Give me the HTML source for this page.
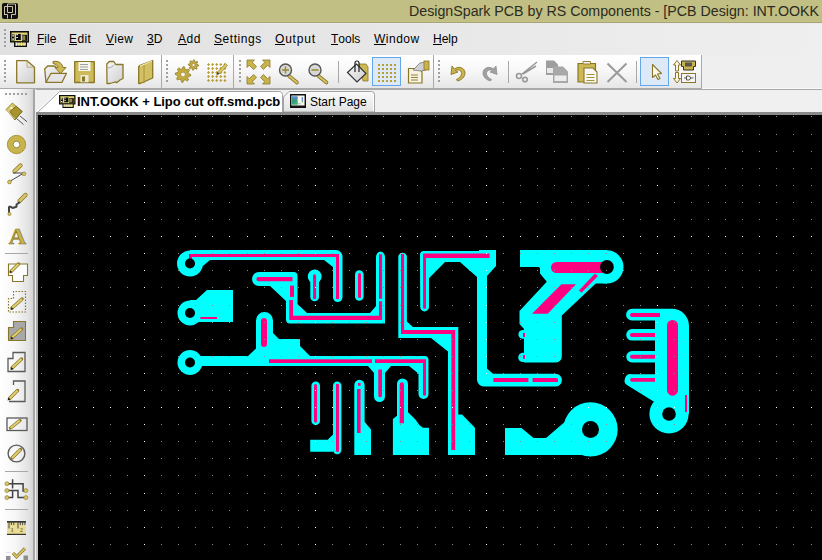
<!DOCTYPE html>
<html><head><meta charset="utf-8">
<style>
*{margin:0;padding:0;box-sizing:border-box}
html,body{width:822px;height:560px;overflow:hidden;background:#f0f0f0;font-family:"Liberation Sans",sans-serif;position:relative}
.a{position:absolute}
svg.a{overflow:visible}
#title{left:0;top:0;width:822px;height:23px;background:linear-gradient(#c1bf83 0,#c1bf83 21px,#c5c387 21px,#c5c387 22px,#a6a374 22px)}
#title .t{left:409px;top:1px;font-size:15.5px;line-height:20px;transform:scaleX(0.917);transform-origin:0 0;color:#2b2b22;white-space:nowrap}
#menubar{left:0;top:23px;width:822px;height:32px;background:linear-gradient(90deg,#e1e1e1,#e6e6e6 40%,#efefef);border-top:1px solid #ebebed}
.mi{position:absolute;top:8px;font-size:12px;line-height:14px;color:#000;white-space:nowrap}
.mi b{font-weight:normal;position:relative;display:inline-block;line-height:14px}
.mi b::after{content:"";position:absolute;left:0;right:0;top:12px;height:1px;background:#000}
#tbrow{left:0;top:55px;width:822px;height:35px;background:#efefef;border-bottom:1px solid #a9a9a9;box-shadow:inset 0 -1px 0 #fafafa}
.tb{position:absolute;top:0;height:34px;border-right:1px solid #a9a9a9;border-bottom:1px solid #a9a9a9;background:linear-gradient(#ffffff,#f8f8f8 45%,#e6e6e6)}
.grip{position:absolute;width:2px;background:repeating-linear-gradient(#a0a0a0 0 2px,transparent 2px 4px)}
#tabrow{left:35px;top:90px;width:787px;height:23px;background:#f0f0f0}
#leftbar{left:0;top:89px;width:36px;height:471px;background:#f0f0f0}
#leftpanel{left:0;top:89px;width:35px;height:471px;background:linear-gradient(90deg,#ffffff 0,#f7f7f7 45%,#e3e3e3 85%,#d4d4d4);border-right:2px solid #a6a6a6}
#canvas{left:38px;top:115px;width:784px;height:445px;background:#000}
#cborder{left:36px;top:112px;width:786px;height:448px;background:linear-gradient(#8a8a8a,#c8c8c8)}
.sep{position:absolute;width:1px;background:#a8a8a8}
.hsep{position:absolute;height:1px;background:#a8a8a8}
</style></head>
<body>
<div id="title" class="a">
  <svg class="a" style="left:2px;top:3px" width="16" height="16" viewBox="0 0 16 16">
    <rect x="0" y="0" width="16" height="16" rx="2" fill="#111"/>
    <path d="M2.5 12V3.5h8M5.5 1v8.5h5V3.5M5.5 1h8v10.5M2.5 11.5h3v4M13.5 11.5h-4v4" stroke="#cfc3a6" stroke-width="1" fill="none"/>
  </svg>
  <div class="a t">DesignSpark PCB by RS Components - [PCB Design: INT.OOKK</div>
</div>
<div id="menubar" class="a">
  <div class="grip" style="left:4px;top:5px;height:18px"></div>
  <svg class="a" style="left:10px;top:7px" width="19" height="16" viewBox="0 0 19 16">
    <path d="M0 0h19v11.6h-2v4.4H4v-4.4H0z" fill="#0d0d0d"/>
    <rect x="1.5" y="1.5" width="16" height="8.6" fill="#e2d672"/>
    <rect x="5" y="11.6" width="11" height="3" fill="#d8cc66"/>
    <path d="M6.5 11.6v3M9 11.6v3M11.5 11.6v3M14 11.6v3" stroke="#eeeeee" stroke-width="1"/>
    <path d="M5.5 11.6v3" stroke="#8a8a20" stroke-width="1"/>
    <rect x="2" y="3.5" width="2.5" height="6" fill="#0d0d0d"/>
    <rect x="2.3" y="4.2" width="1.6" height="1.3" fill="#fff"/><rect x="2.3" y="7.4" width="1.6" height="1.4" fill="#fff"/>
    <rect x="6" y="3" width="4.8" height="6" fill="#0d0d0d"/>
    <rect x="6.2" y="3.2" width="1.8" height="1" fill="#fff"/><rect x="6.2" y="6.1" width="1.8" height="0.9" fill="#fff"/>
    <rect x="12" y="3.8" width="5" height="6" fill="#0d0d0d"/>
    <rect x="12.5" y="4.5" width="0.8" height="4.5" fill="#e8e8e8"/><rect x="13.3" y="4.5" width="2" height="4.5" fill="#9a9020"/>
  </svg>
  <div class="mi" style="left:37px"><b>F</b>ile</div>
  <div class="mi" style="left:69px;letter-spacing:0.4px"><b>E</b>dit</div>
  <div class="mi" style="left:106px;letter-spacing:0.3px"><b>V</b>iew</div>
  <div class="mi" style="left:147px"><b>3</b>D</div>
  <div class="mi" style="left:178px;letter-spacing:0.5px"><b>A</b>dd</div>
  <div class="mi" style="left:214px;letter-spacing:0.55px"><b>S</b>ettings</div>
  <div class="mi" style="left:275px;letter-spacing:0.8px"><b>O</b>utput</div>
  <div class="mi" style="left:331px"><b>T</b>ools</div>
  <div class="mi" style="left:374px;letter-spacing:0.5px"><b>W</b>indow</div>
  <div class="mi" style="left:433px"><b>H</b>elp</div>
</div>
<div id="tbrow" class="a">
  <div class="tb" style="left:0;width:162px"><div class="grip" style="left:4px;top:5px;height:22px"></div></div>
  <div class="tb" style="left:162px;width:72px"><div class="grip" style="left:4px;top:5px;height:22px"></div></div>
  <div class="tb" style="left:234px;width:200px"><div class="grip" style="left:5px;top:5px;height:22px"></div><div class="sep" style="left:104px;top:6px;height:22px"></div></div>
  <div class="tb" style="left:434px;width:268px"><div class="grip" style="left:4px;top:5px;height:22px"></div><div class="sep" style="left:74px;top:6px;height:22px"></div><div class="sep" style="left:202px;top:6px;height:22px"></div></div>
  <!--TBICONS-->
<svg class="a" style="left:0;top:-55px" width="822" height="100">
<defs>
 <linearGradient id="gg" x1="0" y1="0" x2="1" y2="1"><stop offset="0" stop-color="#efe4a0"/><stop offset="0.5" stop-color="#cdb954"/><stop offset="1" stop-color="#a89435"/></linearGradient>
 <linearGradient id="gy" x1="0" y1="0" x2="1" y2="1"><stop offset="0" stop-color="#f6f6f6"/><stop offset="1" stop-color="#cfcfcf"/></linearGradient>
</defs>
<g stroke="#8a7628" stroke-width="1.3" stroke-linejoin="round">
 <!-- new doc -->
 <path d="M16.7 60.7H27l7.5 6.5V82.8H16.7z" fill="url(#gy)"/>
 <path d="M27 60.7v6.5h7.5" fill="none" stroke="#b0a060" stroke-width="0.8"/>
 <!-- open -->
 <path d="M44.7 69l3-3h7l2 2h4l-2 14.3H46z" fill="url(#gy)"/>
 <path d="M46 82.3l5-9h15.5l-4.5 9z" fill="#e4e4e4"/>
 <path d="M53 61.5c6 -1 9 2 10 6h3l-5.5 6l-5.5-6h3c-0.5-2-2-3.5-5-4z" fill="#cdb954" stroke-width="1"/>
 <!-- save -->
 <path d="M74.7 61.7H94.3V82.5H74.7z" fill="#cdbb5a"/>
 <rect x="78.5" y="62" width="12" height="9" fill="#f8f8f0" stroke="none"/>
 <path d="M80 64.5h8M80 67h8M80 69.5h8" stroke="#777" stroke-width="0.7"/>
 <rect x="80.5" y="75" width="8" height="7.3" fill="#e8e8e0" stroke="none"/>
 <rect x="82" y="76.5" width="3" height="5" fill="#8a7628" stroke="none"/>
 <!-- folder doc -->
 <path d="M106.8 64l2.5-2.5h4.5l2 3H123V78.5l-3 1.5l-3 2.5l-2-0.5l-5 1.5H107z" fill="url(#gy)"/>
 <path d="M108 68c3 0 5-2 6.5-3.5" fill="none" stroke="#999" stroke-width="0.8"/>
 <!-- book -->
 <path d="M138.7 66.5l2-1.5l12-4.5V78l-12.5 5.5h-1.5z" fill="#d2c164"/>
 <path d="M144 65v18.3" stroke="#a89435" stroke-width="1"/>
 <path d="M140 66l12-5" stroke="#f8f2c0" stroke-width="1"/>
 <!-- grid pencil -->
</g>
<!-- gears -->
<path d="M190.8 74.5L190.7 76.0L188.2 76.6L187.7 77.6L188.5 80.0L187.3 81.0L185.1 79.7L184.1 80.0L183.0 82.3L181.5 82.2L180.9 79.7L179.9 79.2L177.5 80.0L176.5 78.8L177.8 76.6L177.5 75.6L175.2 74.5L175.3 73.0L177.8 72.4L178.3 71.4L177.5 69.0L178.7 68.0L180.9 69.3L181.9 69.0L183.0 66.7L184.5 66.8L185.1 69.3L186.1 69.8L188.5 69.0L189.5 70.2L188.2 72.4L188.5 73.4z" fill="#c2ab3c" stroke="#8a7628" stroke-width="0.7"/><circle cx="183" cy="74.5" r="2.3" fill="#f6f6f6" stroke="#8a7628" stroke-width="0.5"/><path d="M198.7 65.0L198.6 66.0L196.8 66.4L196.5 67.0L197.2 68.7L196.4 69.3L194.9 68.3L194.2 68.5L193.5 70.2L192.5 70.1L192.1 68.3L191.5 68.0L189.8 68.7L189.2 67.9L190.2 66.4L190.0 65.7L188.3 65.0L188.4 64.0L190.2 63.6L190.5 63.0L189.8 61.3L190.6 60.7L192.1 61.7L192.8 61.5L193.5 59.8L194.5 59.9L194.9 61.7L195.5 62.0L197.2 61.3L197.8 62.1L196.8 63.6L197.0 64.3z" fill="#c2ab3c" stroke="#8a7628" stroke-width="0.7"/><circle cx="193.5" cy="65" r="1.5" fill="#f6f6f6" stroke="#8a7628" stroke-width="0.5"/>
<g fill="#b39b30">
 <path d="M208.5 63.0l1.5 1.5l-1.5 1.5l-1.5 -1.5zM212.6 63.0l1.5 1.5l-1.5 1.5l-1.5 -1.5zM216.7 63.0l1.5 1.5l-1.5 1.5l-1.5 -1.5zM220.8 63.0l1.5 1.5l-1.5 1.5l-1.5 -1.5zM224.9 63.0l1.5 1.5l-1.5 1.5l-1.5 -1.5zM208.5 67.0l1.5 1.5l-1.5 1.5l-1.5 -1.5zM212.6 67.0l1.5 1.5l-1.5 1.5l-1.5 -1.5zM216.7 67.0l1.5 1.5l-1.5 1.5l-1.5 -1.5zM220.8 67.0l1.5 1.5l-1.5 1.5l-1.5 -1.5zM224.9 67.0l1.5 1.5l-1.5 1.5l-1.5 -1.5zM208.5 71.0l1.5 1.5l-1.5 1.5l-1.5 -1.5zM212.6 71.0l1.5 1.5l-1.5 1.5l-1.5 -1.5zM216.7 71.0l1.5 1.5l-1.5 1.5l-1.5 -1.5zM220.8 71.0l1.5 1.5l-1.5 1.5l-1.5 -1.5zM224.9 71.0l1.5 1.5l-1.5 1.5l-1.5 -1.5zM208.5 75.0l1.5 1.5l-1.5 1.5l-1.5 -1.5zM212.6 75.0l1.5 1.5l-1.5 1.5l-1.5 -1.5zM216.7 75.0l1.5 1.5l-1.5 1.5l-1.5 -1.5zM220.8 75.0l1.5 1.5l-1.5 1.5l-1.5 -1.5zM224.9 75.0l1.5 1.5l-1.5 1.5l-1.5 -1.5zM208.5 79.0l1.5 1.5l-1.5 1.5l-1.5 -1.5zM212.6 79.0l1.5 1.5l-1.5 1.5l-1.5 -1.5zM216.7 79.0l1.5 1.5l-1.5 1.5l-1.5 -1.5zM220.8 79.0l1.5 1.5l-1.5 1.5l-1.5 -1.5zM224.9 79.0l1.5 1.5l-1.5 1.5l-1.5 -1.5z"/>
 <path d="M217.5 72l8-8.5l2 2l-8 8.5z" fill="#d8c460" stroke="#8a7628" stroke-width="0.6"/>
 <path d="M216.5 75l1-3l2 2z" fill="#333"/>
</g>
<!-- zoom fit arrows -->
<g fill="#c9b44c" stroke="#8a7628" stroke-width="0.8" stroke-linejoin="round">
 <path transform="translate(247 60) scale(1 1)" d="M0 0h7.5l-2.3 2.3l4.3 4.3l-2.9 2.9l-4.3 -4.3L0 7.5z"/><path transform="translate(270 60) scale(-1 1)" d="M0 0h7.5l-2.3 2.3l4.3 4.3l-2.9 2.9l-4.3 -4.3L0 7.5z"/><path transform="translate(247 84) scale(1 -1)" d="M0 0h7.5l-2.3 2.3l4.3 4.3l-2.9 2.9l-4.3 -4.3L0 7.5z"/><path transform="translate(270 84) scale(-1 -1)" d="M0 0h7.5l-2.3 2.3l4.3 4.3l-2.9 2.9l-4.3 -4.3L0 7.5z"/>
</g>
<!-- zoom in/out -->
<g>
 <path d="M289 76l8 6.5" stroke="#8a7628" stroke-width="3.6" stroke-linecap="round"/>
 <path d="M289 76l8 6.5" stroke="#d6c467" stroke-width="2" stroke-linecap="round"/>
 <circle cx="285.5" cy="70" r="6" fill="#d8d8d8" stroke="#555" stroke-width="1.4"/>
 <path d="M282 70h7M285.5 66.5v7" stroke="#9a8630" stroke-width="1.5"/>
 <path d="M318.5 76l8 6.5" stroke="#8a7628" stroke-width="3.6" stroke-linecap="round"/>
 <path d="M318.5 76l8 6.5" stroke="#d6c467" stroke-width="2" stroke-linecap="round"/>
 <circle cx="315" cy="70" r="6" fill="#d8d8d8" stroke="#555" stroke-width="1.4"/>
 <path d="M311.5 70h7" stroke="#9a8630" stroke-width="1.5"/>
</g>
<!-- paint bucket -->
<g>
 <path d="M359 64h7l2 3v14h-5z" fill="#cdb954" stroke="#8a7628" stroke-width="0.8"/>
 <path d="M347.5 72.5l9-8.5l9.5 9.5l-9 8.5z" fill="url(#gy)" stroke="#333" stroke-width="1.2"/>
 <path d="M355 72V63a2 2 0 0 1 4 0v9" fill="none" stroke="#222" stroke-width="1.2"/>
</g>
<!-- grid button -->
<rect x="372.5" y="57.5" width="28" height="28" fill="#dde9f6" stroke="#64a6ea" stroke-width="1"/>
<g fill="#b5a035">
 <path d="M378 64h2v2h-2zM382 64h2v2h-2zM386 64h2v2h-2zM390 64h2v2h-2zM394 64h2v2h-2zM378 68h2v2h-2zM382 68h2v2h-2zM386 68h2v2h-2zM390 68h2v2h-2zM394 68h2v2h-2zM378 72h2v2h-2zM382 72h2v2h-2zM386 72h2v2h-2zM390 72h2v2h-2zM394 72h2v2h-2zM378 76h2v2h-2zM382 76h2v2h-2zM386 76h2v2h-2zM390 76h2v2h-2zM394 76h2v2h-2zM378 80h2v2h-2zM382 80h2v2h-2zM386 80h2v2h-2zM390 80h2v2h-2zM394 80h2v2h-2z"/>
</g>
<!-- doc hand -->
<g>
 <path d="M408.5 68.5H419l3 3V83H408.5z" fill="#f6f3e0" stroke="#8a7628" stroke-width="1.2"/>
 <path d="M411 75h7M411 77.5h7M411 80h7" stroke="#8a7628" stroke-width="0.9"/>
 <path d="M413 70l7-7l6-1v8l-5 1z" fill="#d0d0d0" stroke="#777" stroke-width="0.8"/>
 <rect x="424" y="61" width="5" height="9" fill="#c9b44c" stroke="#8a7628" stroke-width="0.8"/>
</g>
<!-- undo -->
<path d="M452 66l-1 8.5l7-2.5l-2.5-1.5c3-1.5 6 0 6 3c0 2.5-2 4.5-5 6l1 1.5c4-1 7.5-4 7.5-8c0-5-6-7.5-10.5-4z" fill="#c9b44c" stroke="#8a7628" stroke-width="0.9" stroke-linejoin="round"/>
<!-- redo (gray) -->
<path d="M496 66l1 8.5l-7-2.5l2.5-1.5c-3-1.5-6 0-6 3c0 2.5 2 4.5 5 6l-1 1.5c-4-1-7.5-4-7.5-8c0-5 6-7.5 10.5-4z" fill="#a0a0a0" stroke="#909090" stroke-width="0.8"/>
<!-- scissors -->
<g stroke="#9a9a9a" fill="none" stroke-width="1.6">
 <path d="M537 62l-15 12M536 66l-13 8"/>
 <circle cx="519" cy="76" r="2.5"/><circle cx="525" cy="79.5" r="2.3"/>
</g>
<!-- copy -->
<g>
 <path d="M546 60.5h8l4 4V75h-12z" fill="#9e9e9e"/>
 <rect x="547" y="68" width="9" height="5" fill="#e8e8e8"/>
 <path d="M553 66.5h10l5 5V83h-15z" fill="#a8a8a8"/>
 <rect x="554" y="75" width="13" height="6.5" fill="#ececec" stroke="#9e9e9e" stroke-width="0.8"/>
</g>
<!-- paste -->
<g>
 <path d="M578 63.5h17.5V82H578z" fill="#cdb954" stroke="#8a7628" stroke-width="1.2" rx="1"/>
 <path d="M583 64v-2.5h7.5V64z" fill="#f4f4f4" stroke="#8a7628" stroke-width="0.9"/>
 <path d="M584 68h9l4 4V83H584z" fill="#f8f8f4" stroke="#8a7628" stroke-width="1.1"/>
 <path d="M586.5 74.5h8M586.5 77.5h8M586.5 80.5h8" stroke="#a8922e" stroke-width="1"/>
</g>
<!-- X -->
<path d="M607.5 63.5l19 18.5M626.5 63.5l-19 18.5" stroke="#9a9a9a" stroke-width="2"/>
<!-- select -->
<rect x="640.5" y="57.5" width="28" height="28" fill="#dde9f6" stroke="#64a6ea" stroke-width="1"/>
<path d="M652.5 64.5V77.5l3-2.5l2.5 4.5l2-1l-2.5-4.5l4 -0.5z" fill="#fbf8ea" stroke="#8a7628" stroke-width="1.1" stroke-linejoin="round"/>
<!-- flip -->
<g stroke="#8a7628" stroke-width="1" fill="#f8f6ea">
 <path d="M677 60.5l-3.5 4.5h2v6h3v-6h2z"/>
 <path d="M677 83l-3.5-4.5h2v-6h3v6h2z"/>
 <path d="M681.5 61h14v5.5h-2v3.5h-10v-3.5h-2z" fill="#c9b44c" stroke="#333"/>
 <rect x="685" y="62.5" width="7" height="4" fill="#555" stroke="none"/>
 <rect x="681.5" y="73.5" width="14" height="9" fill="#f6f6f2"/>
 <path d="M684 78h2.5M686.5 76v4h2a2 2 0 0 0 0-4zM690.5 78h3" stroke="#333" stroke-width="0.8" fill="none"/>
</g>
</svg>

</div>
<div id="tabrow" class="a"></div>
<svg class="a" style="left:0;top:0" width="822" height="120">
  <defs><linearGradient id="tg2" x1="0" y1="0" x2="0" y2="1"><stop offset="0" stop-color="#fbfbfb"/><stop offset="1" stop-color="#e2e2e2"/></linearGradient></defs>
  <path d="M283.5 112V97l5.5-5.5H371.5a3 3 0 0 1 3 3V112z" fill="url(#tg2)" stroke="#a3a3a3" stroke-width="1"/>
  <path d="M373.5 95v16" stroke="#ffffff" stroke-width="1"/>
  <rect x="36" y="112" width="786" height="1" fill="#cfcfcf"/>
  <rect x="36" y="113" width="786" height="1" fill="#a5a5a5"/>
  <rect x="36" y="114" width="786" height="1" fill="#6e6e6e"/>
  <path d="M35 113V112L59.5 91H282.5V113z" fill="#ffffff"/><path d="M35.5 112.5H37.5L59.7 91.5H279.5a3 3 0 0 1 3 3V112.5" fill="none" stroke="#a3a3a3" stroke-width="1"/><rect x="37" y="112" width="245" height="1" fill="#fff"/>
</svg>
<svg class="a" style="left:59px;top:95px" width="16.5" height="13" viewBox="0 0 19 16" preserveAspectRatio="none">
    <path d="M0 0h19v11.6h-2v4.4H4v-4.4H0z" fill="#0d0d0d"/>
    <rect x="1.5" y="1.5" width="16" height="8.6" fill="#e2d672"/>
    <rect x="5" y="11.6" width="11" height="3" fill="#d8cc66"/>
    <path d="M6.5 11.6v3M9 11.6v3M11.5 11.6v3M14 11.6v3" stroke="#eeeeee" stroke-width="1"/>
    <path d="M5.5 11.6v3" stroke="#8a8a20" stroke-width="1"/>
    <rect x="2" y="3.5" width="2.5" height="6" fill="#0d0d0d"/>
    <rect x="2.3" y="4.2" width="1.6" height="1.3" fill="#fff"/><rect x="2.3" y="7.4" width="1.6" height="1.4" fill="#fff"/>
    <rect x="6" y="3" width="4.8" height="6" fill="#0d0d0d"/>
    <rect x="6.2" y="3.2" width="1.8" height="1" fill="#fff"/><rect x="6.2" y="6.1" width="1.8" height="0.9" fill="#fff"/>
    <rect x="12" y="3.8" width="5" height="6" fill="#0d0d0d"/>
    <rect x="12.5" y="4.5" width="0.8" height="4.5" fill="#e8e8e8"/><rect x="13.3" y="4.5" width="2" height="4.5" fill="#9a9020"/>
  </svg>
<div class="a" style="left:77px;top:94px;font-size:13px;font-weight:bold;letter-spacing:-0.05px;line-height:15px;color:#000;white-space:nowrap">INT.OOKK + Lipo cut off.smd.pcb</div>
<svg class="a" style="left:290px;top:94px" width="16" height="14" viewBox="0 0 17 14" preserveAspectRatio="none">
  <rect x="0" y="0" width="17" height="14" fill="#111"/>
  <rect x="1.5" y="1.5" width="14" height="10" fill="#fbf8ee"/>
  <rect x="2" y="2.5" width="6" height="8" fill="#3f9a8a"/>
  <path d="M2 10.5l6-3v3z" fill="#33c060"/><rect x="2" y="2.5" width="6" height="2" fill="#5a8ad0"/>
  <rect x="12.5" y="3" width="1" height="4" fill="#2a5fd0"/><rect x="12.5" y="7" width="1" height="1.5" fill="#30b040"/>
  <rect x="8.5" y="9" width="3" height="1.5" fill="#c8c8c8"/>
</svg>
<div class="a" style="left:310px;top:95px;font-size:12px;line-height:15px;color:#000;white-space:nowrap">Start Page</div>
<div id="leftbar" class="a"></div>
<div id="leftpanel" class="a"><div class="grip" style="left:5px;top:4px;height:2px;width:22px;background:repeating-linear-gradient(90deg,#a0a0a0 0 2px,transparent 2px 4px)"></div>
  <div class="hsep" style="left:5px;top:164px;width:23px"></div>
  <div class="hsep" style="left:5px;top:382px;width:23px"></div>
  <div class="hsep" style="left:5px;top:420px;width:23px"></div>
  <svg class="a" style="left:0;top:-89px" width="36" height="560">
<defs>
 <linearGradient id="pg" x1="0" y1="0" x2="1" y2="0"><stop offset="0" stop-color="#c8c8c8"/><stop offset="1" stop-color="#9a9a9a"/></linearGradient>
</defs>
<!-- component -->
<path d="M16.5 118.5l7 6M20 116l7 5.7" stroke="#555" stroke-width="1"/>
<path d="M12.4 103L22.1 111.5L14.9 119.8L6 109.6z" fill="#d8c86a" stroke="#8a7628" stroke-width="0.8"/>
<path d="M10 111.5L16.2 106.2L22.1 111.5L14.9 119.8z" fill="#a8942f" stroke="#6e5e1a" stroke-width="0.8"/>
<path d="M7 110.5l8 8.5" stroke="#f0e6a8" stroke-width="0.8"/>
<circle cx="11.4" cy="108" r="1.1" fill="#fff"/>
<!-- pad -->
<circle cx="16.5" cy="144.5" r="9.2" fill="#c8b44c"/>
<circle cx="16.5" cy="144.5" r="9.2" fill="none" stroke="#9c8830" stroke-width="0.8"/>
<circle cx="16.5" cy="144.5" r="3.3" fill="#ffffff" stroke="#8a7628" stroke-width="0.8"/>
<!-- track -->
<path d="M20.5 165.5l-6 5.8" stroke="#8a7628" stroke-width="4.2" stroke-linecap="round"/>
<path d="M20.5 165.5l-6 5.8" stroke="#d6c466" stroke-width="2.8" stroke-linecap="round"/>
<path d="M13 173h11l-14.5 8.5" stroke="#333" stroke-width="0.9" fill="none"/>
<circle cx="24" cy="173.8" r="1.9" fill="#d6c466" stroke="#8a7628" stroke-width="0.6"/>
<circle cx="9.5" cy="182" r="1.9" fill="#d6c466" stroke="#8a7628" stroke-width="0.6"/>
<!-- route -->
<path d="M19.5 201l6-6" stroke="#8a7628" stroke-width="4.2" stroke-linecap="round"/>
<path d="M19.5 201l6-6" stroke="#d6c466" stroke-width="2.8" stroke-linecap="round"/>
<path d="M20 202l-3.5 2.5v2.2l-4 1.3l-2-1.3h-1.5v6" stroke="#444" stroke-width="2" fill="none" stroke-linejoin="bevel"/>
<circle cx="9.5" cy="214" r="1.6" fill="#d6c466" stroke="#8a7628" stroke-width="0.6"/>
<!-- A -->
<text x="17.5" y="244" text-anchor="middle" font-family="Liberation Serif" font-weight="bold" font-size="24" fill="#c8b44c" stroke="#8a7628" stroke-width="0.7">A</text>
<!-- shape1 -->
<path d="M8.5 264h19v11.5h-4v6h-11v-6h-4z" fill="#fff" stroke="#8a7628" stroke-width="1.1"/>
<path d="M11 271.5l7.5-7.5" stroke="#8a7628" stroke-width="3.4" stroke-linecap="round"/>
<path d="M11 271.5l7.5-7.5" stroke="#e0d070" stroke-width="2"/>
<path d="M9.5 273l1-2.5l1.5 1.5z" fill="#222"/>
<!-- shape2 dotted -->
<path d="M13.5 298.5v-7h12v20.5h-17v-13.5h5" fill="none" stroke="#8a7628" stroke-width="1.2" stroke-dasharray="1.6 1.4"/>
<path d="M12 308l10-9" stroke="#8a7628" stroke-width="3.4" stroke-linecap="round"/>
<path d="M12 308l10-9" stroke="#e0d070" stroke-width="2"/>
<path d="M10.5 310l1-3l2 2z" fill="#222"/>
<!-- shape3 filled -->
<path d="M13.5 321.5h12v19h-17v-13h5z" fill="#a8a8a8" stroke="#8a7628" stroke-width="1.1"/>
<path d="M12 337.5l9.5-8.5" stroke="#8a7628" stroke-width="3.4" stroke-linecap="round"/>
<path d="M12 337.5l9.5-8.5" stroke="#e0d070" stroke-width="2"/>
<path d="M10.5 339.5l1-3l2 2z" fill="#222"/>
<!-- shape4 -->
<path d="M13 352.5h12v19h-17v-13h5z" fill="none" stroke="#5a5a5a" stroke-width="1.3"/>
<path d="M12 368l9.5-9" stroke="#8a7628" stroke-width="3.4" stroke-linecap="round"/>
<path d="M12 368l9.5-9" stroke="#e0d070" stroke-width="2"/>
<path d="M10.5 370l1-3l2 2z" fill="#222"/>
<!-- shape5 -->
<path d="M13.5 385v-4h11.5v20.5h-16" fill="none" stroke="#5a5a5a" stroke-width="1.3"/>
<path d="M9.5 398.5l8-8" stroke="#8a7628" stroke-width="3.4" stroke-linecap="round"/>
<path d="M9.5 398.5l8-8" stroke="#e0d070" stroke-width="2"/>
<path d="M7.5 400.5l1-3l2 2z" fill="#222"/>
<!-- rect -->
<rect x="7" y="418" width="20" height="12.5" fill="none" stroke="#5a5a5a" stroke-width="1.3"/>
<path d="M10.5 428l9.5-7.5" stroke="#8a7628" stroke-width="3.4" stroke-linecap="round"/>
<path d="M10.5 428l9.5-7.5" stroke="#e0d070" stroke-width="2"/>
<!-- circle -->
<circle cx="16.5" cy="453.5" r="8.4" fill="none" stroke="#5a5a5a" stroke-width="1.4"/>
<path d="M12 458l8.5-8.5" stroke="#8a7628" stroke-width="3.4" stroke-linecap="round"/>
<path d="M12 458l8.5-8.5" stroke="#e0d070" stroke-width="2"/>
<!-- net -->
<path d="M12.6 479.3v9.2M7 483.7h16.1v7.2h2.5M7 490.6h11v7h7.5M7 497.6h5.6v-7" stroke="#444" stroke-width="1.5" fill="none"/>
<g fill="#d6c466" stroke="#8a7628" stroke-width="0.6">
 <circle cx="6.9" cy="483.7" r="2"/><circle cx="6.9" cy="490.6" r="2"/><circle cx="6.9" cy="497.6" r="2"/>
 <circle cx="25.9" cy="490.6" r="2"/><circle cx="25.9" cy="497.6" r="2"/>
</g>
<!-- ruler -->
<rect x="7" y="521" width="19" height="14" fill="#e8dc96"/>
<rect x="7" y="521" width="19" height="1.6" fill="#333"/>
<rect x="7" y="533.8" width="19" height="1.2" fill="#333"/>
<path d="M9 521v7.5M18 521v7.5M11.4 521v4M13.8 521v4M20.3 521v4M22.6 521v4M24.9 521v4" stroke="#3a3a3a" stroke-width="0.9"/>
<text x="12" y="532" text-anchor="middle" font-family="Liberation Serif" font-weight="bold" font-size="6.5" fill="#8a7628">1</text>
<text x="21.3" y="532" text-anchor="middle" font-family="Liberation Serif" font-weight="bold" font-size="6.5" fill="#8a7628">2</text>
<!-- check -->
<path d="M6 556h4.5v4H6zM23.5 555.5h4.5v4.5h-4.5z" fill="#8e8e8e"/>
<path d="M6 552.5h4.5M23.5 552.5h4.5" stroke="#e0e0e0" stroke-width="1"/>
<path d="M13 553l3.5 3.8l8.5-8.5" stroke="#8a7628" stroke-width="3.2" fill="none"/>
<path d="M13 553l3.5 3.8l8.5-8.5" stroke="#d6c466" stroke-width="1.8" fill="none"/>
</svg>

</div>
<div id="cborder" class="a"></div>
<div id="canvas" class="a"></div>
<svg class="a" style="left:0;top:0" width="822" height="560" viewBox="0 0 822 560">
<g fill="#00ffff" stroke="none">
 <!-- pad1 + top trace -->
 <circle cx="190" cy="263.5" r="13"/>
 <rect x="190" y="250" width="145" height="10"/>
 <path d="M330 250h6a6.5 6.5 0 0 1 6.5 6.5V297.3a4.75 4.75 0 0 1 -9.5 0V267l-9-7z"/>
 <path d="M194 260h16l-6.5 5.5h-9.5z"/>
 <!-- pad2 -->
 <circle cx="190" cy="313" r="12.5"/>
 <path d="M190 300h6l11-10h26v32h-43z"/>
 <!-- pad3 + long trace -->
 <circle cx="190" cy="362.5" r="12.5"/>
 <path d="M190 356h234.5a4 4 0 0 1 4 4v6H190z"/>
 <path d="M418.5 366h10v28a4.7 4.7 0 0 1 -10 0z"/>
 <path d="M409 366h10v8z"/>
 <path d="M256 320.5a8.5 8.5 0 0 1 17 0V333l6 6h21v7l10 10H248l8-7.5z"/>
 <path d="M368 366h23l-6 7v23.5a5.5 5.5 0 0 1 -11 0V373z"/>
 <!-- L trace + C -->
 <path d="M259 272h34.5a4 4 0 0 1 4 4v28l9.5 9h69v-55.6a4.5 5.8 0 0 1 9 0V323.6H290a4 4 0 0 1 -4 -4V301l-16 -15h-11a7 7 0 0 1 0 -14z"/>
 <path d="M370 313l6-7v7z"/>
 <!-- pill 315 -->
 <circle cx="314.7" cy="276.5" r="6.9"/>
 <path d="M310.3 276h8.7v21a4.35 4.35 0 0 1 -8.7 0z"/>
 <!-- pill B -->
 <path d="M355 274.6a4.3 4.3 0 0 1 8.6 0V296.4a4.3 4.3 0 0 1 -8.6 0z"/>
 <!-- trace D -->
 <path d="M398.3 257a4.3 4.3 0 0 1 8.6 0V321.4l6 5.6H458.3V455H448V351.4L431 338H398.3z"/>
 <path d="M458 414.5h4l13 13.2V455H458z"/>
 <!-- trace E + band + F -->
 <path d="M420 255a4 4 0 0 1 4 -4H479v-1H496v16l-9 10V368.6l6 5.1H555.4a6.45 6.45 0 0 1 0 12.9H484a7 7 0 0 1 -7 -7V277l-17 -15H445l-16 16.3V307a4.4 4.4 0 0 1 -8.8 0z"/>
 <!-- blob -->
 <path d="M520 250H607v33.5h-11.3L561.8 315.6V356.5a6 6 0 0 1 -6 6H524V329l-4.5 -5V311L546.8 281.8L540 273.5V268l-1 -1H520z"/>
 <circle cx="606.9" cy="266.9" r="16.6"/>
 <circle cx="522.8" cy="334.4" r="4.4"/>
 <circle cx="522.8" cy="357.4" r="4.6"/>
 <!-- bottom pills -->
 <path d="M311.4 385.7a4.3 4.3 0 0 1 8.6 0V420.8a4.3 4.3 0 0 1 -8.6 0z"/>
 <path d="M333 385.7a4.2 4.2 0 0 1 8.4 0V450.1a4.2 4.2 0 0 1 -8.4 0V451.7H310.2V439.7h17.5l5.3-5.1z"/>
 <path d="M354.3 384.9a5.15 5.15 0 0 1 10.3 0V421.7l6.4 7.7V455H354.3z"/>
 <path d="M397 384a5.5 5.5 0 0 1 11 0V412.3l7 6.8l4.4 6l3.5 2.6H429V455H392.9V419l4.1 -3.3z"/>
 <!-- bottom-right pad -->
 <circle cx="590.5" cy="429.4" r="27.2"/>
 <path d="M505 428h16.5l12 10H546l19 -16.3L590 429V455H505z"/>
 <!-- comb -->
 <path d="M632 308.75h40a17 17 0 0 1 17 17V414H655V320.6H632a5.9 5.9 0 0 1 0 -11.85z"/>
 <path d="M632 329h23v11.6h-23a5.8 5.8 0 0 1 0 -11.6z"/>
 <path d="M632 351h23v11.5h-23a5.75 5.75 0 0 1 0 -11.5z"/>
 <path d="M632 374.3h23v27.5L653.6 401.4L627.8 385.6A6.1 6.1 0 0 1 632 374.3z"/>
 <circle cx="669" cy="414" r="19.6"/>
 <path d="M655 400l34 0v14l-34 0z"/>
</g>

<g fill="#ff0080" stroke="none">
 <path d="M189 254h150v3h-147v2h-3z"/>
 <rect x="336" y="254" width="3" height="45"/>
 <rect x="200.4" y="317" width="16.5" height="2"/>
 <path d="M261 321a3 3 0 0 1 6 0v23a3 3 0 0 1 -6 0z"/>
 <rect x="269" y="359.3" width="103" height="3.7"/>
 <path d="M375 359.3h51v35a1.5 1.5 0 0 1 -3 0V363h-48z"/>
 <path d="M378.3 369.4h3.7v26a1.85 1.85 0 0 1 -3.7 0z"/>
 <path d="M258.6 276.9h33.9v4.4h-33.9a2.2 2.2 0 0 1 0 -4.4z"/>
 <rect x="290" y="285.6" width="4" height="11.3"/>
 <path d="M289.3 300h3.8v15.7h85.9v-14.5h3.1v18.8H289.3z"/>
 <rect x="379" y="254.3" width="3.1" height="44.5"/>
 <path d="M313.1 275.8a1.5 1.5 0 0 1 3 0v22a1.5 1.5 0 0 1 -3 0z"/>
 <path d="M358 274.5a1.5 1.5 0 0 1 3 0v22a1.5 1.5 0 0 1 -3 0z"/>
 <path d="M401 254h3.1v76h51.1v120h-3.8V334H401z"/>
 <path d="M423.1 253.6h66.6v4.3H426V307.5a1.45 1.45 0 0 1 -2.9 0z"/>
 <rect x="493.4" y="378" width="35" height="4"/>
 <path d="M532.6 378H556a2 2 0 0 1 2 2v2H532.6z"/>
 <path d="M556.5 262H605v11H556.5a5.5 5.5 0 0 1 0 -11z"/>
 <path d="M561.4 284.2H576l-28.3 29.5H532z"/>
 <path d="M595 273.5l3 2.5l-16.5 16.8l-2.6 -2.4z"/>
 <rect x="523" y="333" width="2" height="4"/>
 <rect x="523" y="355" width="2" height="3.75"/>
 <path d="M314 385.5a1.55 1.55 0 0 1 3.1 0v35.6a1.55 1.55 0 0 1 -3.1 0z"/>
 <rect x="336" y="384" width="2.9" height="67.7"/>
 <rect x="357" y="389" width="3.6" height="44"/>
 <rect x="358" y="383" width="2.6" height="2.7"/>
 <path d="M399.7 384.3a2.15 2.15 0 0 1 4.3 0v39h-4.3z"/>
 <path d="M632 312.9h28v4h-28a2 2 0 0 1 0 -4z"/>
 <path d="M632 332.9h23v4.2h-23a2.1 2.1 0 0 1 0 -4.2z"/>
 <path d="M632 354.75h23v4h-23a2 2 0 0 1 0 -4z"/>
 <path d="M632 377.9h23v3.8h-23a1.9 1.9 0 0 1 0 -3.8z"/>
 <path d="M667 325.4a5.5 5.5 0 0 1 11 0V390.2a5.5 5.5 0 0 1 -11 0z"/>
 <rect x="685" y="395" width="2.1" height="17.1"/>
</g>
<g fill="#000">
 <circle cx="190" cy="263.5" r="5"/>
 <circle cx="190" cy="313" r="5"/>
 <circle cx="190" cy="362.5" r="5"/>
 <circle cx="606.9" cy="267" r="6.9"/>
 <circle cx="590.5" cy="429.4" r="8.5"/>
 <circle cx="669" cy="414" r="6.8"/>
</g>
</svg>

<svg class="a" style="left:0;top:0" width="822" height="560" shape-rendering="crispEdges"><path fill="#8a8a8a" d="M41 116h1v1h-1zM41 134h1v1h-1zM41 151h1v1h-1zM41 168h1v1h-1zM41 185h1v1h-1zM41 202h1v1h-1zM41 219h1v1h-1zM41 253h1v1h-1zM41 270h1v1h-1zM41 287h1v1h-1zM41 305h1v1h-1zM41 322h1v1h-1zM41 339h1v1h-1zM41 356h1v1h-1zM41 373h1v1h-1zM41 390h1v1h-1zM41 424h1v1h-1zM41 441h1v1h-1zM41 458h1v1h-1zM41 475h1v1h-1zM41 493h1v1h-1zM41 510h1v1h-1zM41 527h1v1h-1zM41 544h1v1h-1zM59 116h1v1h-1zM59 134h1v1h-1zM59 151h1v1h-1zM59 168h1v1h-1zM59 185h1v1h-1zM59 202h1v1h-1zM59 219h1v1h-1zM59 253h1v1h-1zM59 270h1v1h-1zM59 287h1v1h-1zM59 305h1v1h-1zM59 322h1v1h-1zM59 339h1v1h-1zM59 356h1v1h-1zM59 373h1v1h-1zM59 390h1v1h-1zM59 424h1v1h-1zM59 441h1v1h-1zM59 458h1v1h-1zM59 475h1v1h-1zM59 493h1v1h-1zM59 510h1v1h-1zM59 527h1v1h-1zM59 544h1v1h-1zM76 116h1v1h-1zM76 134h1v1h-1zM76 151h1v1h-1zM76 168h1v1h-1zM76 185h1v1h-1zM76 202h1v1h-1zM76 219h1v1h-1zM76 253h1v1h-1zM76 270h1v1h-1zM76 287h1v1h-1zM76 305h1v1h-1zM76 322h1v1h-1zM76 339h1v1h-1zM76 356h1v1h-1zM76 373h1v1h-1zM76 390h1v1h-1zM76 424h1v1h-1zM76 441h1v1h-1zM76 458h1v1h-1zM76 475h1v1h-1zM76 493h1v1h-1zM76 510h1v1h-1zM76 527h1v1h-1zM76 544h1v1h-1zM93 116h1v1h-1zM93 134h1v1h-1zM93 151h1v1h-1zM93 168h1v1h-1zM93 185h1v1h-1zM93 202h1v1h-1zM93 219h1v1h-1zM93 253h1v1h-1zM93 270h1v1h-1zM93 287h1v1h-1zM93 305h1v1h-1zM93 322h1v1h-1zM93 339h1v1h-1zM93 356h1v1h-1zM93 373h1v1h-1zM93 390h1v1h-1zM93 424h1v1h-1zM93 441h1v1h-1zM93 458h1v1h-1zM93 475h1v1h-1zM93 493h1v1h-1zM93 510h1v1h-1zM93 527h1v1h-1zM93 544h1v1h-1zM110 116h1v1h-1zM110 134h1v1h-1zM110 151h1v1h-1zM110 168h1v1h-1zM110 185h1v1h-1zM110 202h1v1h-1zM110 219h1v1h-1zM110 253h1v1h-1zM110 270h1v1h-1zM110 287h1v1h-1zM110 305h1v1h-1zM110 322h1v1h-1zM110 339h1v1h-1zM110 356h1v1h-1zM110 373h1v1h-1zM110 390h1v1h-1zM110 424h1v1h-1zM110 441h1v1h-1zM110 458h1v1h-1zM110 475h1v1h-1zM110 493h1v1h-1zM110 510h1v1h-1zM110 527h1v1h-1zM110 544h1v1h-1zM127 116h1v1h-1zM127 134h1v1h-1zM127 151h1v1h-1zM127 168h1v1h-1zM127 185h1v1h-1zM127 202h1v1h-1zM127 219h1v1h-1zM127 253h1v1h-1zM127 270h1v1h-1zM127 287h1v1h-1zM127 305h1v1h-1zM127 322h1v1h-1zM127 339h1v1h-1zM127 356h1v1h-1zM127 373h1v1h-1zM127 390h1v1h-1zM127 424h1v1h-1zM127 441h1v1h-1zM127 458h1v1h-1zM127 475h1v1h-1zM127 493h1v1h-1zM127 510h1v1h-1zM127 527h1v1h-1zM127 544h1v1h-1zM161 116h1v1h-1zM161 134h1v1h-1zM161 151h1v1h-1zM161 168h1v1h-1zM161 185h1v1h-1zM161 202h1v1h-1zM161 219h1v1h-1zM161 253h1v1h-1zM161 270h1v1h-1zM161 287h1v1h-1zM161 305h1v1h-1zM161 322h1v1h-1zM161 339h1v1h-1zM161 356h1v1h-1zM161 373h1v1h-1zM161 390h1v1h-1zM161 424h1v1h-1zM161 441h1v1h-1zM161 458h1v1h-1zM161 475h1v1h-1zM161 493h1v1h-1zM161 510h1v1h-1zM161 527h1v1h-1zM161 544h1v1h-1zM178 116h1v1h-1zM178 134h1v1h-1zM178 151h1v1h-1zM178 168h1v1h-1zM178 185h1v1h-1zM178 202h1v1h-1zM178 219h1v1h-1zM178 253h1v1h-1zM178 270h1v1h-1zM178 287h1v1h-1zM178 305h1v1h-1zM178 322h1v1h-1zM178 339h1v1h-1zM178 356h1v1h-1zM178 373h1v1h-1zM178 390h1v1h-1zM178 424h1v1h-1zM178 441h1v1h-1zM178 458h1v1h-1zM178 475h1v1h-1zM178 493h1v1h-1zM178 510h1v1h-1zM178 527h1v1h-1zM178 544h1v1h-1zM195 116h1v1h-1zM195 134h1v1h-1zM195 151h1v1h-1zM195 168h1v1h-1zM195 185h1v1h-1zM195 202h1v1h-1zM195 219h1v1h-1zM195 253h1v1h-1zM195 270h1v1h-1zM195 287h1v1h-1zM195 305h1v1h-1zM195 322h1v1h-1zM195 339h1v1h-1zM195 356h1v1h-1zM195 373h1v1h-1zM195 390h1v1h-1zM195 424h1v1h-1zM195 441h1v1h-1zM195 458h1v1h-1zM195 475h1v1h-1zM195 493h1v1h-1zM195 510h1v1h-1zM195 527h1v1h-1zM195 544h1v1h-1zM212 116h1v1h-1zM212 134h1v1h-1zM212 151h1v1h-1zM212 168h1v1h-1zM212 185h1v1h-1zM212 202h1v1h-1zM212 219h1v1h-1zM212 253h1v1h-1zM212 270h1v1h-1zM212 287h1v1h-1zM212 305h1v1h-1zM212 322h1v1h-1zM212 339h1v1h-1zM212 356h1v1h-1zM212 373h1v1h-1zM212 390h1v1h-1zM212 424h1v1h-1zM212 441h1v1h-1zM212 458h1v1h-1zM212 475h1v1h-1zM212 493h1v1h-1zM212 510h1v1h-1zM212 527h1v1h-1zM212 544h1v1h-1zM229 116h1v1h-1zM229 134h1v1h-1zM229 151h1v1h-1zM229 168h1v1h-1zM229 185h1v1h-1zM229 202h1v1h-1zM229 219h1v1h-1zM229 253h1v1h-1zM229 270h1v1h-1zM229 287h1v1h-1zM229 305h1v1h-1zM229 322h1v1h-1zM229 339h1v1h-1zM229 356h1v1h-1zM229 373h1v1h-1zM229 390h1v1h-1zM229 424h1v1h-1zM229 441h1v1h-1zM229 458h1v1h-1zM229 475h1v1h-1zM229 493h1v1h-1zM229 510h1v1h-1zM229 527h1v1h-1zM229 544h1v1h-1zM247 116h1v1h-1zM247 134h1v1h-1zM247 151h1v1h-1zM247 168h1v1h-1zM247 185h1v1h-1zM247 202h1v1h-1zM247 219h1v1h-1zM247 253h1v1h-1zM247 270h1v1h-1zM247 287h1v1h-1zM247 305h1v1h-1zM247 322h1v1h-1zM247 339h1v1h-1zM247 356h1v1h-1zM247 373h1v1h-1zM247 390h1v1h-1zM247 424h1v1h-1zM247 441h1v1h-1zM247 458h1v1h-1zM247 475h1v1h-1zM247 493h1v1h-1zM247 510h1v1h-1zM247 527h1v1h-1zM247 544h1v1h-1zM264 116h1v1h-1zM264 134h1v1h-1zM264 151h1v1h-1zM264 168h1v1h-1zM264 185h1v1h-1zM264 202h1v1h-1zM264 219h1v1h-1zM264 253h1v1h-1zM264 270h1v1h-1zM264 287h1v1h-1zM264 305h1v1h-1zM264 322h1v1h-1zM264 339h1v1h-1zM264 356h1v1h-1zM264 373h1v1h-1zM264 390h1v1h-1zM264 424h1v1h-1zM264 441h1v1h-1zM264 458h1v1h-1zM264 475h1v1h-1zM264 493h1v1h-1zM264 510h1v1h-1zM264 527h1v1h-1zM264 544h1v1h-1zM281 116h1v1h-1zM281 134h1v1h-1zM281 151h1v1h-1zM281 168h1v1h-1zM281 185h1v1h-1zM281 202h1v1h-1zM281 219h1v1h-1zM281 253h1v1h-1zM281 270h1v1h-1zM281 287h1v1h-1zM281 305h1v1h-1zM281 322h1v1h-1zM281 339h1v1h-1zM281 356h1v1h-1zM281 373h1v1h-1zM281 390h1v1h-1zM281 424h1v1h-1zM281 441h1v1h-1zM281 458h1v1h-1zM281 475h1v1h-1zM281 493h1v1h-1zM281 510h1v1h-1zM281 527h1v1h-1zM281 544h1v1h-1zM298 116h1v1h-1zM298 134h1v1h-1zM298 151h1v1h-1zM298 168h1v1h-1zM298 185h1v1h-1zM298 202h1v1h-1zM298 219h1v1h-1zM298 253h1v1h-1zM298 270h1v1h-1zM298 287h1v1h-1zM298 305h1v1h-1zM298 322h1v1h-1zM298 339h1v1h-1zM298 356h1v1h-1zM298 373h1v1h-1zM298 390h1v1h-1zM298 424h1v1h-1zM298 441h1v1h-1zM298 458h1v1h-1zM298 475h1v1h-1zM298 493h1v1h-1zM298 510h1v1h-1zM298 527h1v1h-1zM298 544h1v1h-1zM332 116h1v1h-1zM332 134h1v1h-1zM332 151h1v1h-1zM332 168h1v1h-1zM332 185h1v1h-1zM332 202h1v1h-1zM332 219h1v1h-1zM332 253h1v1h-1zM332 270h1v1h-1zM332 287h1v1h-1zM332 305h1v1h-1zM332 322h1v1h-1zM332 339h1v1h-1zM332 356h1v1h-1zM332 373h1v1h-1zM332 390h1v1h-1zM332 424h1v1h-1zM332 441h1v1h-1zM332 458h1v1h-1zM332 475h1v1h-1zM332 493h1v1h-1zM332 510h1v1h-1zM332 527h1v1h-1zM332 544h1v1h-1zM349 116h1v1h-1zM349 134h1v1h-1zM349 151h1v1h-1zM349 168h1v1h-1zM349 185h1v1h-1zM349 202h1v1h-1zM349 219h1v1h-1zM349 253h1v1h-1zM349 270h1v1h-1zM349 287h1v1h-1zM349 305h1v1h-1zM349 322h1v1h-1zM349 339h1v1h-1zM349 356h1v1h-1zM349 373h1v1h-1zM349 390h1v1h-1zM349 424h1v1h-1zM349 441h1v1h-1zM349 458h1v1h-1zM349 475h1v1h-1zM349 493h1v1h-1zM349 510h1v1h-1zM349 527h1v1h-1zM349 544h1v1h-1zM366 116h1v1h-1zM366 134h1v1h-1zM366 151h1v1h-1zM366 168h1v1h-1zM366 185h1v1h-1zM366 202h1v1h-1zM366 219h1v1h-1zM366 253h1v1h-1zM366 270h1v1h-1zM366 287h1v1h-1zM366 305h1v1h-1zM366 322h1v1h-1zM366 339h1v1h-1zM366 356h1v1h-1zM366 373h1v1h-1zM366 390h1v1h-1zM366 424h1v1h-1zM366 441h1v1h-1zM366 458h1v1h-1zM366 475h1v1h-1zM366 493h1v1h-1zM366 510h1v1h-1zM366 527h1v1h-1zM366 544h1v1h-1zM383 116h1v1h-1zM383 134h1v1h-1zM383 151h1v1h-1zM383 168h1v1h-1zM383 185h1v1h-1zM383 202h1v1h-1zM383 219h1v1h-1zM383 253h1v1h-1zM383 270h1v1h-1zM383 287h1v1h-1zM383 305h1v1h-1zM383 322h1v1h-1zM383 339h1v1h-1zM383 356h1v1h-1zM383 373h1v1h-1zM383 390h1v1h-1zM383 424h1v1h-1zM383 441h1v1h-1zM383 458h1v1h-1zM383 475h1v1h-1zM383 493h1v1h-1zM383 510h1v1h-1zM383 527h1v1h-1zM383 544h1v1h-1zM400 116h1v1h-1zM400 134h1v1h-1zM400 151h1v1h-1zM400 168h1v1h-1zM400 185h1v1h-1zM400 202h1v1h-1zM400 219h1v1h-1zM400 253h1v1h-1zM400 270h1v1h-1zM400 287h1v1h-1zM400 305h1v1h-1zM400 322h1v1h-1zM400 339h1v1h-1zM400 356h1v1h-1zM400 373h1v1h-1zM400 390h1v1h-1zM400 424h1v1h-1zM400 441h1v1h-1zM400 458h1v1h-1zM400 475h1v1h-1zM400 493h1v1h-1zM400 510h1v1h-1zM400 527h1v1h-1zM400 544h1v1h-1zM417 116h1v1h-1zM417 134h1v1h-1zM417 151h1v1h-1zM417 168h1v1h-1zM417 185h1v1h-1zM417 202h1v1h-1zM417 219h1v1h-1zM417 253h1v1h-1zM417 270h1v1h-1zM417 287h1v1h-1zM417 305h1v1h-1zM417 322h1v1h-1zM417 339h1v1h-1zM417 356h1v1h-1zM417 373h1v1h-1zM417 390h1v1h-1zM417 424h1v1h-1zM417 441h1v1h-1zM417 458h1v1h-1zM417 475h1v1h-1zM417 493h1v1h-1zM417 510h1v1h-1zM417 527h1v1h-1zM417 544h1v1h-1zM435 116h1v1h-1zM435 134h1v1h-1zM435 151h1v1h-1zM435 168h1v1h-1zM435 185h1v1h-1zM435 202h1v1h-1zM435 219h1v1h-1zM435 253h1v1h-1zM435 270h1v1h-1zM435 287h1v1h-1zM435 305h1v1h-1zM435 322h1v1h-1zM435 339h1v1h-1zM435 356h1v1h-1zM435 373h1v1h-1zM435 390h1v1h-1zM435 424h1v1h-1zM435 441h1v1h-1zM435 458h1v1h-1zM435 475h1v1h-1zM435 493h1v1h-1zM435 510h1v1h-1zM435 527h1v1h-1zM435 544h1v1h-1zM452 116h1v1h-1zM452 134h1v1h-1zM452 151h1v1h-1zM452 168h1v1h-1zM452 185h1v1h-1zM452 202h1v1h-1zM452 219h1v1h-1zM452 253h1v1h-1zM452 270h1v1h-1zM452 287h1v1h-1zM452 305h1v1h-1zM452 322h1v1h-1zM452 339h1v1h-1zM452 356h1v1h-1zM452 373h1v1h-1zM452 390h1v1h-1zM452 424h1v1h-1zM452 441h1v1h-1zM452 458h1v1h-1zM452 475h1v1h-1zM452 493h1v1h-1zM452 510h1v1h-1zM452 527h1v1h-1zM452 544h1v1h-1zM469 116h1v1h-1zM469 134h1v1h-1zM469 151h1v1h-1zM469 168h1v1h-1zM469 185h1v1h-1zM469 202h1v1h-1zM469 219h1v1h-1zM469 253h1v1h-1zM469 270h1v1h-1zM469 287h1v1h-1zM469 305h1v1h-1zM469 322h1v1h-1zM469 339h1v1h-1zM469 356h1v1h-1zM469 373h1v1h-1zM469 390h1v1h-1zM469 424h1v1h-1zM469 441h1v1h-1zM469 458h1v1h-1zM469 475h1v1h-1zM469 493h1v1h-1zM469 510h1v1h-1zM469 527h1v1h-1zM469 544h1v1h-1zM503 116h1v1h-1zM503 134h1v1h-1zM503 151h1v1h-1zM503 168h1v1h-1zM503 185h1v1h-1zM503 202h1v1h-1zM503 219h1v1h-1zM503 253h1v1h-1zM503 270h1v1h-1zM503 287h1v1h-1zM503 305h1v1h-1zM503 322h1v1h-1zM503 339h1v1h-1zM503 356h1v1h-1zM503 373h1v1h-1zM503 390h1v1h-1zM503 424h1v1h-1zM503 441h1v1h-1zM503 458h1v1h-1zM503 475h1v1h-1zM503 493h1v1h-1zM503 510h1v1h-1zM503 527h1v1h-1zM503 544h1v1h-1zM520 116h1v1h-1zM520 134h1v1h-1zM520 151h1v1h-1zM520 168h1v1h-1zM520 185h1v1h-1zM520 202h1v1h-1zM520 219h1v1h-1zM520 253h1v1h-1zM520 270h1v1h-1zM520 287h1v1h-1zM520 305h1v1h-1zM520 322h1v1h-1zM520 339h1v1h-1zM520 356h1v1h-1zM520 373h1v1h-1zM520 390h1v1h-1zM520 424h1v1h-1zM520 441h1v1h-1zM520 458h1v1h-1zM520 475h1v1h-1zM520 493h1v1h-1zM520 510h1v1h-1zM520 527h1v1h-1zM520 544h1v1h-1zM537 116h1v1h-1zM537 134h1v1h-1zM537 151h1v1h-1zM537 168h1v1h-1zM537 185h1v1h-1zM537 202h1v1h-1zM537 219h1v1h-1zM537 253h1v1h-1zM537 270h1v1h-1zM537 287h1v1h-1zM537 305h1v1h-1zM537 322h1v1h-1zM537 339h1v1h-1zM537 356h1v1h-1zM537 373h1v1h-1zM537 390h1v1h-1zM537 424h1v1h-1zM537 441h1v1h-1zM537 458h1v1h-1zM537 475h1v1h-1zM537 493h1v1h-1zM537 510h1v1h-1zM537 527h1v1h-1zM537 544h1v1h-1zM554 116h1v1h-1zM554 134h1v1h-1zM554 151h1v1h-1zM554 168h1v1h-1zM554 185h1v1h-1zM554 202h1v1h-1zM554 219h1v1h-1zM554 253h1v1h-1zM554 270h1v1h-1zM554 287h1v1h-1zM554 305h1v1h-1zM554 322h1v1h-1zM554 339h1v1h-1zM554 356h1v1h-1zM554 373h1v1h-1zM554 390h1v1h-1zM554 424h1v1h-1zM554 441h1v1h-1zM554 458h1v1h-1zM554 475h1v1h-1zM554 493h1v1h-1zM554 510h1v1h-1zM554 527h1v1h-1zM554 544h1v1h-1zM571 116h1v1h-1zM571 134h1v1h-1zM571 151h1v1h-1zM571 168h1v1h-1zM571 185h1v1h-1zM571 202h1v1h-1zM571 219h1v1h-1zM571 253h1v1h-1zM571 270h1v1h-1zM571 287h1v1h-1zM571 305h1v1h-1zM571 322h1v1h-1zM571 339h1v1h-1zM571 356h1v1h-1zM571 373h1v1h-1zM571 390h1v1h-1zM571 424h1v1h-1zM571 441h1v1h-1zM571 458h1v1h-1zM571 475h1v1h-1zM571 493h1v1h-1zM571 510h1v1h-1zM571 527h1v1h-1zM571 544h1v1h-1zM588 116h1v1h-1zM588 134h1v1h-1zM588 151h1v1h-1zM588 168h1v1h-1zM588 185h1v1h-1zM588 202h1v1h-1zM588 219h1v1h-1zM588 253h1v1h-1zM588 270h1v1h-1zM588 287h1v1h-1zM588 305h1v1h-1zM588 322h1v1h-1zM588 339h1v1h-1zM588 356h1v1h-1zM588 373h1v1h-1zM588 390h1v1h-1zM588 424h1v1h-1zM588 441h1v1h-1zM588 458h1v1h-1zM588 475h1v1h-1zM588 493h1v1h-1zM588 510h1v1h-1zM588 527h1v1h-1zM588 544h1v1h-1zM606 116h1v1h-1zM606 134h1v1h-1zM606 151h1v1h-1zM606 168h1v1h-1zM606 185h1v1h-1zM606 202h1v1h-1zM606 219h1v1h-1zM606 253h1v1h-1zM606 270h1v1h-1zM606 287h1v1h-1zM606 305h1v1h-1zM606 322h1v1h-1zM606 339h1v1h-1zM606 356h1v1h-1zM606 373h1v1h-1zM606 390h1v1h-1zM606 424h1v1h-1zM606 441h1v1h-1zM606 458h1v1h-1zM606 475h1v1h-1zM606 493h1v1h-1zM606 510h1v1h-1zM606 527h1v1h-1zM606 544h1v1h-1zM623 116h1v1h-1zM623 134h1v1h-1zM623 151h1v1h-1zM623 168h1v1h-1zM623 185h1v1h-1zM623 202h1v1h-1zM623 219h1v1h-1zM623 253h1v1h-1zM623 270h1v1h-1zM623 287h1v1h-1zM623 305h1v1h-1zM623 322h1v1h-1zM623 339h1v1h-1zM623 356h1v1h-1zM623 373h1v1h-1zM623 390h1v1h-1zM623 424h1v1h-1zM623 441h1v1h-1zM623 458h1v1h-1zM623 475h1v1h-1zM623 493h1v1h-1zM623 510h1v1h-1zM623 527h1v1h-1zM623 544h1v1h-1zM640 116h1v1h-1zM640 134h1v1h-1zM640 151h1v1h-1zM640 168h1v1h-1zM640 185h1v1h-1zM640 202h1v1h-1zM640 219h1v1h-1zM640 253h1v1h-1zM640 270h1v1h-1zM640 287h1v1h-1zM640 305h1v1h-1zM640 322h1v1h-1zM640 339h1v1h-1zM640 356h1v1h-1zM640 373h1v1h-1zM640 390h1v1h-1zM640 424h1v1h-1zM640 441h1v1h-1zM640 458h1v1h-1zM640 475h1v1h-1zM640 493h1v1h-1zM640 510h1v1h-1zM640 527h1v1h-1zM640 544h1v1h-1zM674 116h1v1h-1zM674 134h1v1h-1zM674 151h1v1h-1zM674 168h1v1h-1zM674 185h1v1h-1zM674 202h1v1h-1zM674 219h1v1h-1zM674 253h1v1h-1zM674 270h1v1h-1zM674 287h1v1h-1zM674 305h1v1h-1zM674 322h1v1h-1zM674 339h1v1h-1zM674 356h1v1h-1zM674 373h1v1h-1zM674 390h1v1h-1zM674 424h1v1h-1zM674 441h1v1h-1zM674 458h1v1h-1zM674 475h1v1h-1zM674 493h1v1h-1zM674 510h1v1h-1zM674 527h1v1h-1zM674 544h1v1h-1zM691 116h1v1h-1zM691 134h1v1h-1zM691 151h1v1h-1zM691 168h1v1h-1zM691 185h1v1h-1zM691 202h1v1h-1zM691 219h1v1h-1zM691 253h1v1h-1zM691 270h1v1h-1zM691 287h1v1h-1zM691 305h1v1h-1zM691 322h1v1h-1zM691 339h1v1h-1zM691 356h1v1h-1zM691 373h1v1h-1zM691 390h1v1h-1zM691 424h1v1h-1zM691 441h1v1h-1zM691 458h1v1h-1zM691 475h1v1h-1zM691 493h1v1h-1zM691 510h1v1h-1zM691 527h1v1h-1zM691 544h1v1h-1zM708 116h1v1h-1zM708 134h1v1h-1zM708 151h1v1h-1zM708 168h1v1h-1zM708 185h1v1h-1zM708 202h1v1h-1zM708 219h1v1h-1zM708 253h1v1h-1zM708 270h1v1h-1zM708 287h1v1h-1zM708 305h1v1h-1zM708 322h1v1h-1zM708 339h1v1h-1zM708 356h1v1h-1zM708 373h1v1h-1zM708 390h1v1h-1zM708 424h1v1h-1zM708 441h1v1h-1zM708 458h1v1h-1zM708 475h1v1h-1zM708 493h1v1h-1zM708 510h1v1h-1zM708 527h1v1h-1zM708 544h1v1h-1zM725 116h1v1h-1zM725 134h1v1h-1zM725 151h1v1h-1zM725 168h1v1h-1zM725 185h1v1h-1zM725 202h1v1h-1zM725 219h1v1h-1zM725 253h1v1h-1zM725 270h1v1h-1zM725 287h1v1h-1zM725 305h1v1h-1zM725 322h1v1h-1zM725 339h1v1h-1zM725 356h1v1h-1zM725 373h1v1h-1zM725 390h1v1h-1zM725 424h1v1h-1zM725 441h1v1h-1zM725 458h1v1h-1zM725 475h1v1h-1zM725 493h1v1h-1zM725 510h1v1h-1zM725 527h1v1h-1zM725 544h1v1h-1zM742 116h1v1h-1zM742 134h1v1h-1zM742 151h1v1h-1zM742 168h1v1h-1zM742 185h1v1h-1zM742 202h1v1h-1zM742 219h1v1h-1zM742 253h1v1h-1zM742 270h1v1h-1zM742 287h1v1h-1zM742 305h1v1h-1zM742 322h1v1h-1zM742 339h1v1h-1zM742 356h1v1h-1zM742 373h1v1h-1zM742 390h1v1h-1zM742 424h1v1h-1zM742 441h1v1h-1zM742 458h1v1h-1zM742 475h1v1h-1zM742 493h1v1h-1zM742 510h1v1h-1zM742 527h1v1h-1zM742 544h1v1h-1zM759 116h1v1h-1zM759 134h1v1h-1zM759 151h1v1h-1zM759 168h1v1h-1zM759 185h1v1h-1zM759 202h1v1h-1zM759 219h1v1h-1zM759 253h1v1h-1zM759 270h1v1h-1zM759 287h1v1h-1zM759 305h1v1h-1zM759 322h1v1h-1zM759 339h1v1h-1zM759 356h1v1h-1zM759 373h1v1h-1zM759 390h1v1h-1zM759 424h1v1h-1zM759 441h1v1h-1zM759 458h1v1h-1zM759 475h1v1h-1zM759 493h1v1h-1zM759 510h1v1h-1zM759 527h1v1h-1zM759 544h1v1h-1zM776 116h1v1h-1zM776 134h1v1h-1zM776 151h1v1h-1zM776 168h1v1h-1zM776 185h1v1h-1zM776 202h1v1h-1zM776 219h1v1h-1zM776 253h1v1h-1zM776 270h1v1h-1zM776 287h1v1h-1zM776 305h1v1h-1zM776 322h1v1h-1zM776 339h1v1h-1zM776 356h1v1h-1zM776 373h1v1h-1zM776 390h1v1h-1zM776 424h1v1h-1zM776 441h1v1h-1zM776 458h1v1h-1zM776 475h1v1h-1zM776 493h1v1h-1zM776 510h1v1h-1zM776 527h1v1h-1zM776 544h1v1h-1zM793 116h1v1h-1zM793 134h1v1h-1zM793 151h1v1h-1zM793 168h1v1h-1zM793 185h1v1h-1zM793 202h1v1h-1zM793 219h1v1h-1zM793 253h1v1h-1zM793 270h1v1h-1zM793 287h1v1h-1zM793 305h1v1h-1zM793 322h1v1h-1zM793 339h1v1h-1zM793 356h1v1h-1zM793 373h1v1h-1zM793 390h1v1h-1zM793 424h1v1h-1zM793 441h1v1h-1zM793 458h1v1h-1zM793 475h1v1h-1zM793 493h1v1h-1zM793 510h1v1h-1zM793 527h1v1h-1zM793 544h1v1h-1zM811 116h1v1h-1zM811 134h1v1h-1zM811 151h1v1h-1zM811 168h1v1h-1zM811 185h1v1h-1zM811 202h1v1h-1zM811 219h1v1h-1zM811 253h1v1h-1zM811 270h1v1h-1zM811 287h1v1h-1zM811 305h1v1h-1zM811 322h1v1h-1zM811 339h1v1h-1zM811 356h1v1h-1zM811 373h1v1h-1zM811 390h1v1h-1zM811 424h1v1h-1zM811 441h1v1h-1zM811 458h1v1h-1zM811 475h1v1h-1zM811 493h1v1h-1zM811 510h1v1h-1zM811 527h1v1h-1zM811 544h1v1h-1z"/><path fill="#ffffff" d="M41 236h1v1h-1zM41 407h1v1h-1zM59 236h1v1h-1zM59 407h1v1h-1zM76 236h1v1h-1zM76 407h1v1h-1zM93 236h1v1h-1zM93 407h1v1h-1zM110 236h1v1h-1zM110 407h1v1h-1zM127 236h1v1h-1zM127 407h1v1h-1zM144 116h1v1h-1zM144 134h1v1h-1zM144 151h1v1h-1zM144 168h1v1h-1zM144 185h1v1h-1zM144 202h1v1h-1zM144 219h1v1h-1zM144 236h1v1h-1zM144 253h1v1h-1zM144 270h1v1h-1zM144 287h1v1h-1zM144 305h1v1h-1zM144 322h1v1h-1zM144 339h1v1h-1zM144 356h1v1h-1zM144 373h1v1h-1zM144 390h1v1h-1zM144 407h1v1h-1zM144 424h1v1h-1zM144 441h1v1h-1zM144 458h1v1h-1zM144 475h1v1h-1zM144 493h1v1h-1zM144 510h1v1h-1zM144 527h1v1h-1zM144 544h1v1h-1zM161 236h1v1h-1zM161 407h1v1h-1zM178 236h1v1h-1zM178 407h1v1h-1zM195 236h1v1h-1zM195 407h1v1h-1zM212 236h1v1h-1zM212 407h1v1h-1zM229 236h1v1h-1zM229 407h1v1h-1zM247 236h1v1h-1zM247 407h1v1h-1zM264 236h1v1h-1zM264 407h1v1h-1zM281 236h1v1h-1zM281 407h1v1h-1zM298 236h1v1h-1zM298 407h1v1h-1zM315 116h1v1h-1zM315 134h1v1h-1zM315 151h1v1h-1zM315 168h1v1h-1zM315 185h1v1h-1zM315 202h1v1h-1zM315 219h1v1h-1zM315 236h1v1h-1zM315 253h1v1h-1zM315 270h1v1h-1zM315 287h1v1h-1zM315 305h1v1h-1zM315 322h1v1h-1zM315 339h1v1h-1zM315 356h1v1h-1zM315 373h1v1h-1zM315 390h1v1h-1zM315 407h1v1h-1zM315 424h1v1h-1zM315 441h1v1h-1zM315 458h1v1h-1zM315 475h1v1h-1zM315 493h1v1h-1zM315 510h1v1h-1zM315 527h1v1h-1zM315 544h1v1h-1zM332 236h1v1h-1zM332 407h1v1h-1zM349 236h1v1h-1zM349 407h1v1h-1zM366 236h1v1h-1zM366 407h1v1h-1zM383 236h1v1h-1zM383 407h1v1h-1zM400 236h1v1h-1zM400 407h1v1h-1zM417 236h1v1h-1zM417 407h1v1h-1zM435 236h1v1h-1zM435 407h1v1h-1zM452 236h1v1h-1zM452 407h1v1h-1zM469 236h1v1h-1zM469 407h1v1h-1zM486 116h1v1h-1zM486 134h1v1h-1zM486 151h1v1h-1zM486 168h1v1h-1zM486 185h1v1h-1zM486 202h1v1h-1zM486 219h1v1h-1zM486 236h1v1h-1zM486 253h1v1h-1zM486 270h1v1h-1zM486 287h1v1h-1zM486 305h1v1h-1zM486 322h1v1h-1zM486 339h1v1h-1zM486 356h1v1h-1zM486 373h1v1h-1zM486 390h1v1h-1zM486 407h1v1h-1zM486 424h1v1h-1zM486 441h1v1h-1zM486 458h1v1h-1zM486 475h1v1h-1zM486 493h1v1h-1zM486 510h1v1h-1zM486 527h1v1h-1zM486 544h1v1h-1zM503 236h1v1h-1zM503 407h1v1h-1zM520 236h1v1h-1zM520 407h1v1h-1zM537 236h1v1h-1zM537 407h1v1h-1zM554 236h1v1h-1zM554 407h1v1h-1zM571 236h1v1h-1zM571 407h1v1h-1zM588 236h1v1h-1zM588 407h1v1h-1zM606 236h1v1h-1zM606 407h1v1h-1zM623 236h1v1h-1zM623 407h1v1h-1zM640 236h1v1h-1zM640 407h1v1h-1zM657 116h1v1h-1zM657 134h1v1h-1zM657 151h1v1h-1zM657 168h1v1h-1zM657 185h1v1h-1zM657 202h1v1h-1zM657 219h1v1h-1zM657 236h1v1h-1zM657 253h1v1h-1zM657 270h1v1h-1zM657 287h1v1h-1zM657 305h1v1h-1zM657 322h1v1h-1zM657 339h1v1h-1zM657 356h1v1h-1zM657 373h1v1h-1zM657 390h1v1h-1zM657 407h1v1h-1zM657 424h1v1h-1zM657 441h1v1h-1zM657 458h1v1h-1zM657 475h1v1h-1zM657 493h1v1h-1zM657 510h1v1h-1zM657 527h1v1h-1zM657 544h1v1h-1zM674 236h1v1h-1zM674 407h1v1h-1zM691 236h1v1h-1zM691 407h1v1h-1zM708 236h1v1h-1zM708 407h1v1h-1zM725 236h1v1h-1zM725 407h1v1h-1zM742 236h1v1h-1zM742 407h1v1h-1zM759 236h1v1h-1zM759 407h1v1h-1zM776 236h1v1h-1zM776 407h1v1h-1zM793 236h1v1h-1zM793 407h1v1h-1zM811 236h1v1h-1zM811 407h1v1h-1z"/></svg>
</body></html>
